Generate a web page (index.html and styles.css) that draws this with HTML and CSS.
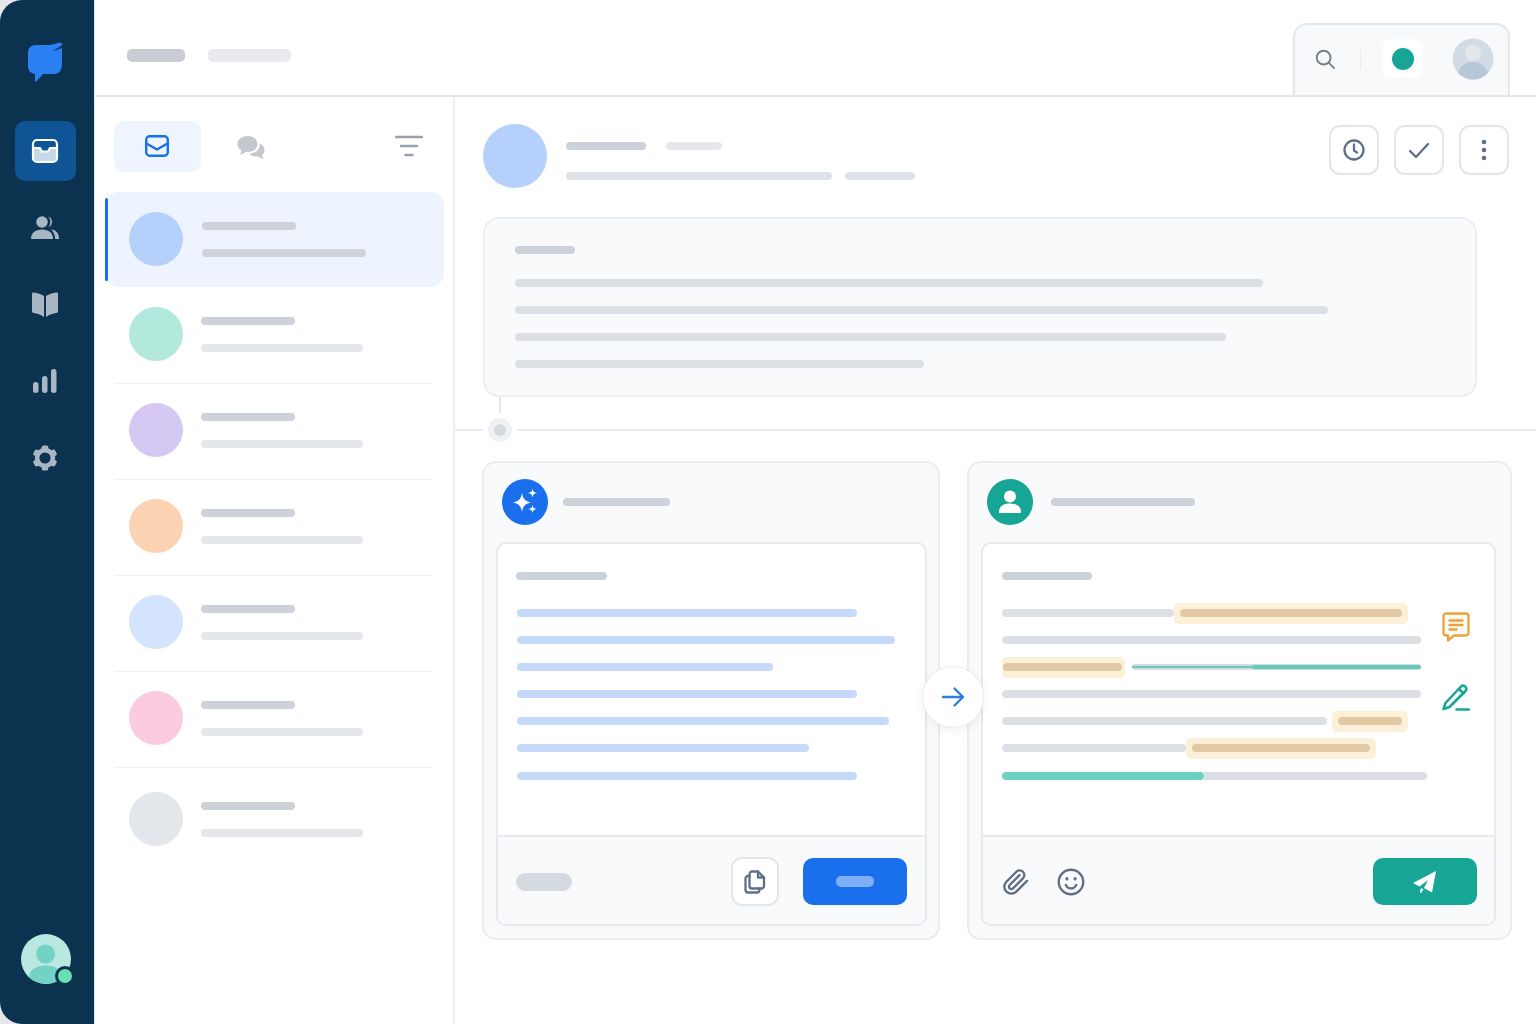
FILE: index.html
```html
<!DOCTYPE html>
<html lang="en">
<head>
<meta charset="utf-8">
<title>Inbox</title>
<link rel="stylesheet" href="styles.css">
</head>
<body>
<div class="app">
  <aside class="rail">
    <svg class="logo" viewBox="0 0 36 40"><path d="M9 3H23L32 .8C35 0 36 2.500 34 4L25 9.500 35 6V20C35 28 33 32 27 32H16L9.500 39.200C9 39.800 8 39.500 8 38.500V32C4 31.500 1 29 1 24V11C1 6 4 3 9 3Z"/></svg>
    <nav class="rail-nav">
      <a class="rail-item rail-item-active">
        <svg class="rail-icon" viewBox="0 0 28 26"><path class="tray" d="M3 10h6l2 3.500h6l2-3.500h6v11a2.500 2.500 0 0 1-2.500 2.500h-17A2.500 2.500 0 0 1 3 21Z"/><path class="tray-line" d="M2.500 10H9l2 3.500h6l2-3.500h6.500"/><rect class="tray-line" x="2" y="2" width="24" height="22" rx="4"/></svg>
      </a>
      <a class="rail-item">
        <svg class="rail-icon" viewBox="0 0 28 26"><circle class="fill" cx="11" cy="7" r="5.800"/><path class="fill" d="M0 24c0-6 4-9.500 11-9.500S22 18 22 24Z"/><path class="fill" d="M17.500 1.800a5.600 5.600 0 0 1 0 10.400 8 8 0 0 0 0-10.400ZM20 14.500c5 .5 8 3.500 8 9.500h-3.800c0-4-1.400-7-4.200-9.500Z"/></svg>
      </a>
      <a class="rail-item">
        <svg class="rail-icon" viewBox="0 0 28 26"><path class="fill" d="M1 3c0-1 .8-1.800 1.800-1.500C6.500 2 10 3.200 13 5v21C10 23.500 6 22.500 2.500 22 1.500 21.800 1 21 1 20Z"/><path class="fill" d="M27 3c0-1-.8-1.800-1.800-1.500C21.500 2 18 3.200 15 5v21c3-2.500 7-3.500 10.500-4 1-.2 1.500-1 1.500-2Z"/></svg>
      </a>
      <a class="rail-item">
        <svg class="rail-icon" viewBox="0 0 28 26"><rect class="fill" x="2" y="14" width="5.500" height="11" rx="2.700"/><rect class="fill" x="11" y="8" width="5.500" height="17" rx="2.700"/><rect class="fill" x="20" y="1" width="5.500" height="24" rx="2.700"/></svg>
      </a>
      <a class="rail-item">
        <svg class="rail-icon" viewBox="0 0 28 28"><g class="fill"><rect x="10.500" y="0.500" width="7" height="27" rx="2"/><rect x="10.500" y="0.500" width="7" height="27" rx="2" transform="rotate(60 14 14)"/><rect x="10.500" y="0.500" width="7" height="27" rx="2" transform="rotate(120 14 14)"/></g><circle class="gear-ring" cx="14" cy="14" r="8.500"/></svg>
      </a>
    </nav>
    <div class="me">
      <svg class="me-pic" viewBox="0 0 50 50"><circle class="me-bg" cx="25" cy="25" r="25"/><circle class="me-fg" cx="24.500" cy="20" r="9.500"/><path class="me-fg" d="M8 43c1-8 8-11.500 16.500-11.500S40 35 42 43a25 25 0 0 1-34 0Z"/></svg>
      <span class="me-dot"></span>
    </div>
  </aside>

  <div class="main">
    <header class="topbar">
      <div class="crumbs">
        <span class="bar crumb-a"></span>
        <span class="bar crumb-b"></span>
      </div>
      <div class="tools">
        <svg class="ico tool-search" viewBox="0 0 24 24"><circle cx="10.500" cy="10.500" r="7.500"/><path d="M16 16l6 6"/></svg>
        <span class="tool-sep"></span>
        <span class="status-box"><span class="status-dot"></span></span>
        <svg class="top-avatar" viewBox="0 0 42 42"><defs><clipPath id="ta"><circle cx="21" cy="21" r="20.500"/></clipPath></defs><circle class="ta-bg" cx="21" cy="21" r="20.500"/><g clip-path="url(#ta)"><circle class="ta-head" cx="21" cy="15" r="8"/><ellipse class="ta-body" cx="21" cy="37" rx="15" ry="13"/></g></svg>
      </div>
    </header>

    <div class="workspace">
      <section class="list">
        <div class="list-tabs">
          <a class="tab tab-active">
            <svg class="ico-blue" viewBox="0 0 24 22"><rect x="1.200" y="1.200" width="21.600" height="19.600" rx="3.500"/><path d="M1.500 8.500 12 14.500 22.500 8.500"/></svg>
          </a>
          <a class="tab">
            <svg class="chat-ico" viewBox="0 0 28 24"><path d="M11 0c5.500 0 9.500 3.500 9.500 8s-4 8-9.500 8H9l-6 3 1.500-4.500C2 13 .5 10.800.5 8 .5 3.500 5 0 11 0Z"/><path d="M22.500 7.500c3 1.200 5 3.500 5 6.500 0 2.200-1 4-2.500 5.200l1.500 4.300-5.500-3H19c-3 0-5.500-1-7-3 6 .2 11-3 10.500-10Z"/></svg>
          </a>
          <svg class="filter-ico" viewBox="0 0 28 22"><path d="M1 2h26M6 11h16M10.500 20h7"/></svg>
        </div>
        <div class="thread thread-active">
          <span class="face face-blue"></span>
          <div class="thread-text"><span class="bar bar-mid" style="width:94px"></span><span class="bar bar-mid-2" style="width:164px"></span></div>
        </div>
        <div class="thread">
          <span class="face face-green"></span>
          <div class="thread-text"><span class="bar bar-mid" style="width:94px"></span><span class="bar bar-soft" style="width:162px"></span></div>
        </div>
        <div class="thread">
          <span class="face face-purple"></span>
          <div class="thread-text"><span class="bar bar-mid" style="width:94px"></span><span class="bar bar-soft" style="width:162px"></span></div>
        </div>
        <div class="thread">
          <span class="face face-orange"></span>
          <div class="thread-text"><span class="bar bar-mid" style="width:94px"></span><span class="bar bar-soft" style="width:162px"></span></div>
        </div>
        <div class="thread">
          <span class="face face-sky"></span>
          <div class="thread-text"><span class="bar bar-mid" style="width:94px"></span><span class="bar bar-soft" style="width:162px"></span></div>
        </div>
        <div class="thread">
          <span class="face face-pink"></span>
          <div class="thread-text"><span class="bar bar-mid" style="width:94px"></span><span class="bar bar-soft" style="width:162px"></span></div>
        </div>
        <div class="thread thread-last">
          <span class="face face-grey"></span>
          <div class="thread-text"><span class="bar bar-mid" style="width:94px"></span><span class="bar bar-soft" style="width:162px"></span></div>
        </div>
      </section>

      <section class="detail">
        <div class="detail-head">
          <span class="head-face"></span>
          <div class="head-text">
            <div class="head-row"><span class="bar bar-mid" style="width:80px"></span><span class="bar bar-soft" style="width:56px"></span></div>
            <div class="head-row head-row-b"><span class="bar bar-soft-2" style="width:266px"></span><span class="bar bar-soft-2" style="width:70px"></span></div>
          </div>
          <div class="head-actions">
            <a class="action"><svg class="ico" viewBox="0 0 24 24"><circle cx="12" cy="12" r="9.500"/><path d="M12 6.500V12.500l3 2"/></svg></a>
            <a class="action"><svg class="ico" viewBox="0 0 24 24"><path d="M3 13l6 6L21 6"/></svg></a>
            <a class="action"><svg class="dots" viewBox="0 0 6 22"><circle cx="3" cy="3" r="2.300"/><circle cx="3" cy="11" r="2.300"/><circle cx="3" cy="19" r="2.300"/></svg></a>
          </div>
        </div>

        <div class="message">
          <span class="bar bar-mid message-title" style="width:60px"></span>
          <span class="bar bar-soft-3" style="width:748px"></span>
          <span class="bar bar-soft-3" style="width:813px"></span>
          <span class="bar bar-soft-3" style="width:711px"></span>
          <span class="bar bar-soft-3" style="width:409px"></span>
        </div>

        <div class="divider"><span class="divider-stem"></span><span class="divider-node"></span></div>

        <div class="panels">
          <article class="panel">
            <div class="panel-head">
              <span class="badge badge-blue"><svg class="badge-ico" viewBox="0 0 30 30"><path d="M12 6c1 6 3 8 9 9.500-6 1.500-8 3.500-9 9.500-1-6-3-8-9-9.500C9 14 11 12 12 6Z"/><path d="M22.500 1.500c.5 3 1.500 4 4.500 4.500-3 .5-4 1.500-4.500 4.500C22 7.500 21 6.500 18 6c3-.5 4-1.500 4.500-4.500Z"/><path d="M22.500 18c.5 2.800 1.300 3.600 4 4-2.700.5-3.500 1.300-4 4-.5-2.700-1.300-3.500-4-4 2.700-.4 3.500-1.200 4-4Z"/></svg></span>
              <span class="bar bar-mid" style="width:107px"></span>
            </div>
            <div class="card">
              <div class="card-body">
                <span class="bar bar-mid card-title" style="width:91px"></span>
                <div class="lines">
                  <span class="bar bar-blue" style="width:340px"></span>
                  <span class="bar bar-blue" style="width:378px"></span>
                  <span class="bar bar-blue" style="width:256px"></span>
                  <span class="bar bar-blue" style="width:340px"></span>
                  <span class="bar bar-blue" style="width:372px"></span>
                  <span class="bar bar-blue" style="width:292px"></span>
                  <span class="bar bar-blue" style="width:340px"></span>
                </div>
              </div>
              <div class="card-foot">
                <span class="foot-pill"></span>
                <a class="copy-btn"><svg class="ico" viewBox="0 0 24 24"><path d="M9 1.500h6l6 6V16a2.500 2.500 0 0 1-2.500 2.500H9A2.500 2.500 0 0 1 6.500 16V4A2.500 2.500 0 0 1 9 1.500Z"/><path d="M15 1.500V7.500h6"/><path d="M6.500 6H5A2.500 2.500 0 0 0 2.500 8.500V20A2.500 2.500 0 0 0 5 22.500h9a2.500 2.500 0 0 0 2.500-2.500v-1.500"/></svg></a>
                <a class="btn btn-blue"><span class="btn-pill"></span></a>
              </div>
            </div>
          </article>

          <article class="panel panel-wide">
            <div class="panel-head">
              <span class="badge badge-teal"><svg class="badge-ico" viewBox="0 0 30 30"><circle cx="15" cy="9.500" r="6"/><path d="M4 25c0-6 5-8.500 11-8.500S26 19 26 25c0 .6-.4 1-1 1H5c-.6 0-1-.4-1-1Z"/></svg></span>
              <span class="bar bar-mid" style="width:144px"></span>
            </div>
            <div class="card">
              <div class="card-body">
                <span class="bar bar-mid card-title" style="width:90px"></span>
                <div class="review">
                  <div class="lines lines-wide">
                    <div class="line"><span class="bar bar-soft-3" style="width:172px"></span><span class="mark" style="width:234px"><span class="bar bar-tan"></span></span></div>
                    <div class="line"><span class="bar bar-soft-3" style="width:419px"></span></div>
                    <div class="line"><span class="mark mark-first" style="width:123px"><span class="bar bar-tan"></span></span><span class="thin-line"><span class="thin-fill"></span></span></div>
                    <div class="line"><span class="bar bar-soft-3" style="width:419px"></span></div>
                    <div class="line"><span class="bar bar-soft-3" style="width:325px"></span><span class="mark mark-gap" style="width:76px"><span class="bar bar-tan"></span></span></div>
                    <div class="line"><span class="bar bar-soft-3" style="width:184px"></span><span class="mark" style="width:190px"><span class="bar bar-tan"></span></span></div>
                    <div class="line"><span class="bar bar-teal" style="width:202px"></span><span class="bar bar-soft-3 bar-rest" style="width:223px"></span></div>
                  </div>
                  <div class="side-icons">
                    <svg class="side-orange" viewBox="0 0 28 30"><path d="M4 1.500h20A2.500 2.500 0 0 1 26.500 4v17a2.500 2.500 0 0 1-2.500 2.500H12l-6 5v-5H4A2.500 2.500 0 0 1 1.500 21V4A2.500 2.500 0 0 1 4 1.500Z"/><path d="M7.500 8.500h13M7.500 13h13M7.500 17.500h7"/></svg>
                    <svg class="side-teal" viewBox="0 0 28 28"><path d="M14.500 25.500H27"/><path d="M19 2.500a3.200 3.200 0 0 1 4.500 4.500L7.500 23 1.500 25l2-6Z"/><path d="M17 5l4.500 4.500"/></svg>
                  </div>
                </div>
              </div>
              <div class="card-foot">
                <svg class="ico foot-ico" viewBox="0 0 24 24"><path d="M21.440 11.050l-9.190 9.190a6 6 0 0 1-8.490-8.490l8.570-8.570A4 4 0 1 1 18 8.840l-8.590 8.570a2 2 0 0 1-2.830-2.830l8.490-8.480"/></svg>
                <svg class="ico foot-ico foot-smile" viewBox="0 0 24 24"><circle cx="12" cy="12" r="10.500"/><path d="M7.500 14.500c1 2 2.500 3 4.500 3s3.500-1 4.500-3"/><path class="eye" d="M8.500 9v.5M15.500 9v.5"/></svg>
                <a class="btn btn-teal"><svg class="send-ico" viewBox="0 0 24 24"><path d="M24 1 1 13l6.500 3.500L16 10l-4 8 8 4.500Z"/><path d="M9 18l2.500 1.500-2 3c-1 1-2 0-1.500-1Z"/></svg></a>
              </div>
            </div>
          </article>
          <span class="flow-arrow"><svg class="arrow-ico" viewBox="0 0 24 24"><path d="M2 12h20M13.500 3.500 22 12 13.500 20.500"/></svg></span>
        </div>
      </section>
    </div>
  </div>
</div>
</body>
</html>
```

FILE: styles.css
```css
* { box-sizing: border-box; }
html, body { margin: 0; height: 100%; background: #fff; }
body { font-family: "Inter", "Liberation Sans", sans-serif; overflow: hidden; }
svg { display: block; flex: none; }
a { display: flex; }

.app { display: flex; width: 1536px; height: 1024px; background: #e6e7ea; }

/* rail */
.rail { width: 94px; flex: none; display: flex; flex-direction: column; align-items: center; padding: 42px 3px 40px 0; background: #0b3350; border-radius: 22px 0 0 22px; }
.logo { width: 36px; height: 40px; margin: 0 0 39px -2px; fill: #2a7ff3; }
.rail-nav { display: flex; flex-direction: column; gap: 16.700px; }
.rail-item { width: 61px; height: 60px; padding-right: 2px; border-radius: 10px; align-items: center; justify-content: center; }
.rail-item-active { background: #0f5595; }
.rail-icon { width: 28px; height: 26px; }
.rail-icon .fill { fill: #a9b6c3; }
.tray { fill: #c4d8ea; }
.tray-line { fill: none; stroke: #fff; stroke-width: 2.200; stroke-linejoin: round; }
.gear-ring { fill: #0b3350; stroke: #a9b6c3; stroke-width: 5; }
.me { position: relative; margin-top: auto; width: 50px; height: 50px; }
.me-pic { width: 50px; height: 50px; }
.me-bg { fill: #b9e8e0; }
.me-fg { fill: #72d3c4; }
.me-dot { position: absolute; left: 34px; top: 32px; width: 20px; height: 20px; border-radius: 50%; background: #68dfb1; border: 3px solid #0b3350; }

/* top bar */
.main { flex: 1; min-width: 0; display: flex; flex-direction: column; background: #fff; border-left: 1px solid #e6e9ef; }
.topbar { height: 97px; flex: none; display: flex; justify-content: space-between; align-items: flex-end; border-bottom: 2px solid #e3e7ee; padding: 0 26px 0 32px; }
.crumbs { align-self: center; display: flex; gap: 23px; margin-top: 15px; }
.bar { display: block; height: 8px; border-radius: 4px; flex: none; }
.crumb-a { width: 58px; height: 13px; border-radius: 5px; background: #c9cdd4; }
.crumb-b { width: 83px; height: 13px; border-radius: 5px; background: #e8eaee; }
.tools { width: 217px; height: 72px; flex: none; display: flex; align-items: center; padding: 0 0 3px 19px; background: #f8f9fb; border: 2px solid #e3e7ee; border-bottom: 0; border-radius: 14px 14px 0 0; }
.ico { width: 24px; height: 24px; fill: none; stroke: #5f6f86; stroke-width: 2.300; stroke-linecap: round; stroke-linejoin: round; }
.tool-search { width: 22px; height: 22px; stroke: #71808f; stroke-width: 2; }
.tool-sep { width: 1px; height: 20px; flex: none; background: #e9ecf0; margin-left: 24px; }
.status-box { width: 41px; height: 39px; flex: none; margin-left: 21px; border-radius: 9px; background: #fff; display: flex; align-items: center; justify-content: center; }
.status-dot { width: 22px; height: 22px; border-radius: 50%; background: #17a596; }
.top-avatar { width: 42px; height: 42px; margin-left: 29px; }
.ta-bg { fill: #d3dbe5; }
.ta-head { fill: #e4e8ed; }
.ta-body { fill: #b6c7d9; }

/* list */
.workspace { flex: 1; min-height: 0; display: flex; }
.list { width: 360px; flex: none; padding: 24px 0 0 9px; border-right: 2px solid #eceef2; }
.list-tabs { display: flex; align-items: center; height: 51px; margin: 0 0 20px 10px; }
.tab { width: 87px; height: 51px; border-radius: 10px; align-items: center; justify-content: center; }
.tab-active { background: #eef5fe; }
.ico-blue { width: 24px; height: 22px; margin: -2px 2px 0 0; fill: none; stroke: #1a6fec; stroke-width: 2.400; stroke-linejoin: round; stroke-linecap: round; }
.chat-ico { width: 28px; height: 24px; margin-top: 2px; fill: #c3c8cf; margin-right: -13px; }
.filter-ico { width: 28px; height: 22px; margin: -2px 30px 0 auto; fill: none; stroke: #98a2af; stroke-width: 2.500; stroke-linecap: round; }
.thread { height: 96px; margin: 0 21px 0 11px; padding: 0 0 2px 14px; display: flex; align-items: center; gap: 18px; border-bottom: 1px solid #f1f2f5; }
.thread-active { height: 95px; margin: 0 9px 1px 1px; padding: 0 0 0 24px; gap: 19px; border: 0; border-radius: 14px; background: #edf4fe; position: relative; }
.thread-active::before { content: ""; position: absolute; left: 0; top: 6px; bottom: 6px; width: 3px; border-radius: 2px; background: #1a6fec; }
.thread-last { height: 104px; border-bottom: 0; }
.thread-text { display: flex; flex-direction: column; gap: 19px; }
.face { width: 54px; height: 54px; border-radius: 50%; flex: none; margin-bottom: 1px; }
.face-blue { background: #b5d1fb; }
.face-green { background: #b3e9dd; }
.face-purple { background: #d5c8f3; }
.face-orange { background: #fcd3b2; }
.face-sky { background: #d3e4fc; }
.face-pink { background: #fbcbdf; }
.face-grey { background: #e3e6ea; }
.bar-mid { background: #cdd1d8; }
.bar-mid-2 { background: #ced3da; }
.bar-soft { background: #e5e7eb; }
.bar-soft-2 { background: #dfe2e7; }
.bar-soft-3 { background: #dcdfe4; }
.bar-blue { background: #c5dafb; }
.bar-tan { width: 100%; background: #e2c8a5; }
.bar-teal { background: #6cd1c0; }
.bar-rest { border-radius: 0 4px 4px 0; }

/* detail */
.detail { flex: 1; min-width: 0; display: flex; flex-direction: column; }
.detail-head { display: flex; height: 120px; padding: 27px 27px 0 28px; }
.head-face { width: 64px; height: 64px; border-radius: 50%; background: #b5d1fb; flex: none; }
.head-text { margin: 18px 0 0 19px; }
.head-row { display: flex; gap: 20px; }
.head-row-b { gap: 13px; margin-top: 22px; }
.head-actions { margin-left: auto; display: flex; gap: 15px; padding-top: 1px; }
.action { width: 50px; height: 50px; border: 2px solid #e2e6ec; border-radius: 11px; background: #fff; align-items: center; justify-content: center; }
.dots { width: 6px; height: 22px; fill: #5f6f86; }
.message { width: 994px; height: 180px; margin-left: 28px; flex: none; padding: 27px 30px 0; display: flex; flex-direction: column; gap: 19px; background: #f9fafb; border: 2px solid #eceef2; border-radius: 16px; }
.message-title { margin-bottom: 6px; }
.divider { position: relative; height: 64px; flex: none; }
.divider::before { content: ""; position: absolute; left: 0; right: 0; top: 32px; height: 2px; background: #e9ebef; }
.divider-stem { position: absolute; left: 44px; top: 0; width: 2px; height: 17px; background: #e3e6eb; }
.divider-node { position: absolute; left: 33px; top: 21px; width: 24px; height: 24px; border-radius: 50%; background: #d5d9e0; border: 6px solid #f0f1f4; box-shadow: 0 0 0 5px #fff; }

/* panels */
.panels { position: relative; display: flex; gap: 27px; padding-left: 27px; height: 479px; flex: none; }
.panel { width: 458px; display: flex; flex-direction: column; padding: 0 11px 12px 12px; background: #f9fafb; border: 2px solid #e9ecf1; border-radius: 14px; }
.panel-wide { width: 545px; padding-right: 14px; }
.panel-head { height: 79px; flex: none; display: flex; align-items: center; gap: 15px; padding: 0 0 2px 6px; }
.panel-wide .panel-head { gap: 18px; }
.badge { width: 46px; height: 46px; border-radius: 50%; display: flex; align-items: center; justify-content: center; flex: none; }
.badge-blue { background: #1a6fec; }
.badge-teal { background: #17a596; }
.badge-ico { width: 30px; height: 30px; fill: #fff; }
.card { flex: 1; min-height: 0; display: flex; flex-direction: column; background: #fff; border: 2px solid #e6e9ee; border-radius: 10px; overflow: hidden; }
.card-body { flex: 1; padding: 28px 0 0 18px; }
.panel-wide .card-body { padding-left: 19px; }
.card-title { margin-bottom: 29px; }
.lines { display: flex; flex-direction: column; gap: 19px; padding-left: 1px; }
.lines > :last-child { margin-top: 1px; }
.lines-wide { width: 425px; padding-left: 0; }
.review { display: flex; gap: 15px; }
.line { height: 8px; display: flex; align-items: center; }
.mark { height: 21px; margin: -7px 0; padding: 0 6px; display: flex; align-items: center; background: #fdf0d9; border-radius: 5px; flex: none; }
.mark-first { margin-left: 0; padding: 0 3px 0 1px; }
.mark-gap { margin-left: 5px; }
.thin-line { position: relative; display: block; width: 289px; height: 6px; margin-left: 7px; background: #d6dae1; border-radius: 3px; }
.thin-line::before { content: ""; position: absolute; left: 0; right: 0; top: 2px; height: 2px; background: #63cdbb; }
.thin-fill { position: absolute; right: 0; top: 1px; width: 169px; height: 4px; border-radius: 2px; background: #63cdbb; }
.side-icons { display: flex; flex-direction: column; gap: 42px; margin-top: 3px; }
.side-orange { width: 28px; height: 30px; fill: #fdfaf3; stroke: #e8a33d; stroke-width: 2.300; stroke-linejoin: round; stroke-linecap: round; }
.side-teal { width: 28px; height: 28px; fill: none; stroke: #17a596; stroke-width: 2.500; stroke-linejoin: round; stroke-linecap: round; }
.card-foot { height: 89px; flex: none; display: flex; align-items: center; padding: 2px 18px 0; background: #f9fafb; border-top: 2px solid #e6e9ee; }
.panel-wide .card-foot { padding-right: 17px; }
.foot-pill { width: 56px; height: 18px; border-radius: 9px; background: #d5d9e0; margin: 1px auto 0 0; }
.copy-btn { width: 48px; height: 49px; margin-right: 24px; border: 2px solid #e2e6ec; border-radius: 11px; background: #fff; align-items: center; justify-content: center; }
.btn { width: 104px; height: 47px; border-radius: 10px; align-items: center; justify-content: center; }
.btn-blue { background: #1a6fec; }
.btn-teal { background: #17a596; margin-left: auto; padding-right: 2px; }
.btn-pill { width: 38px; height: 11px; border-radius: 5px; background: #7fb0f7; }
.foot-ico { width: 28px; height: 28px; margin-left: 1px; stroke-width: 2; }
.foot-smile { margin-left: 27px; }
.eye { stroke-width: 2.600; }
.send-ico { width: 24px; height: 24px; fill: #fff; }
.flow-arrow { position: absolute; left: 467px; top: 205px; width: 62px; height: 62px; border-radius: 50%; background: #fff; border: 1px solid #e9ecf1; box-shadow: 0 3px 10px rgba(30, 50, 80, .07); display: flex; align-items: center; justify-content: center; }
.arrow-ico { width: 24px; height: 24px; fill: none; stroke: #2a7fe0; stroke-width: 2.400; stroke-linecap: round; stroke-linejoin: round; }
```
